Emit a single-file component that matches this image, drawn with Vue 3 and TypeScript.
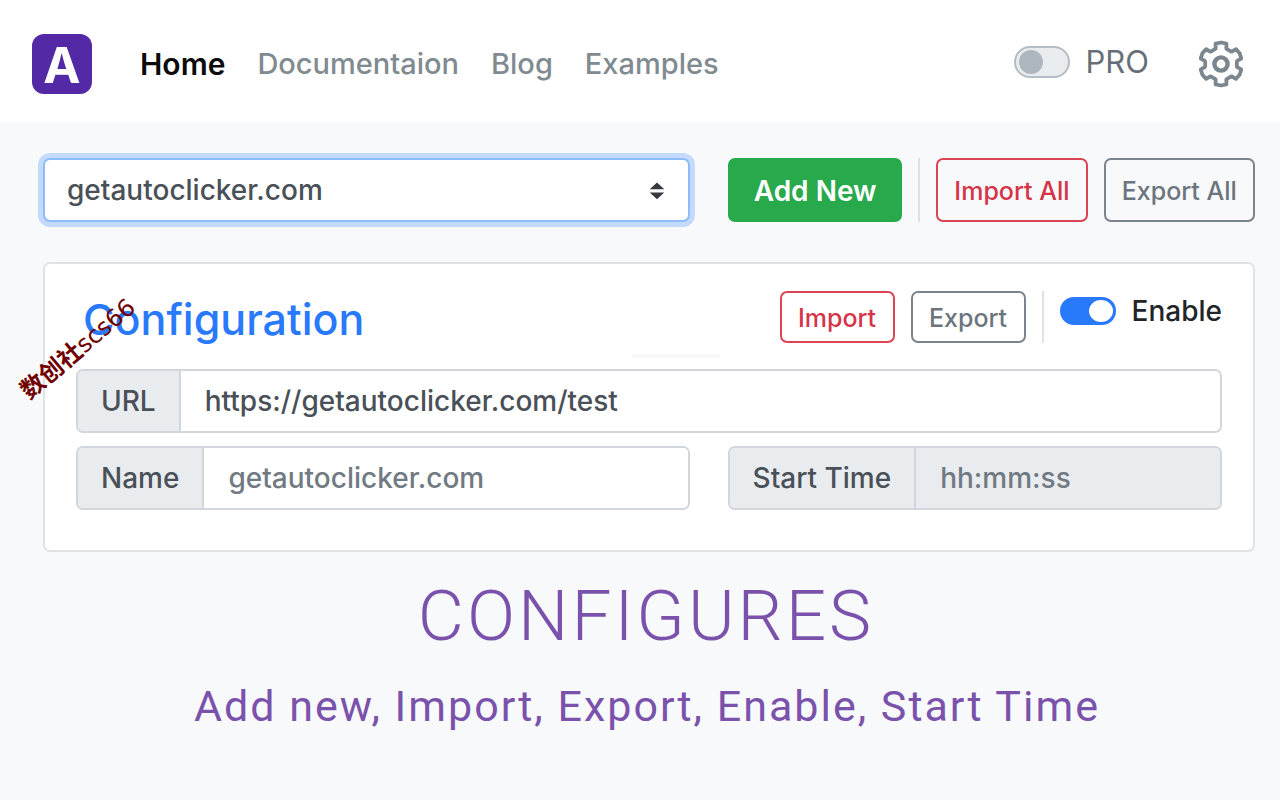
<script setup lang="ts">
import { ref } from 'vue'

interface NavLink {
  label: string
  active?: boolean
}

const links: NavLink[] = [
  { label: 'Home', active: true },
  { label: 'Documentaion' },
  { label: 'Blog' },
  { label: 'Examples' },
]

const pro = ref(false)
const enabled = ref(true)
const selected = ref('getautoclicker.com')
const url = ref('https://getautoclicker.com/test')
const name = ref('')
const startTime = ref('')

// Outline of a six-toothed cog centred on the origin.
function cogPath(outer: number, inner: number): string {
  const points: string[] = []
  for (let tooth = 0; tooth < 6; tooth++) {
    const centre = tooth * 60 - 90
    const corners: [number, number][] = [
      [centre - 19, inner],
      [centre - 15, outer],
      [centre, outer + 0.5],
      [centre + 15, outer],
      [centre + 19, inner],
      [centre + 24, inner - 0.5],
      [centre + 36, inner - 0.5],
    ]
    for (const [angle, radius] of corners) {
      const rad = (angle * Math.PI) / 180
      points.push(`${(radius * Math.cos(rad)).toFixed(2)} ${(radius * Math.sin(rad)).toFixed(2)}`)
    }
  }
  return `M${points.join('L')}Z`
}

const cog = cogPath(21, 16.4)
</script>

<template>
  <div class="page">
    <header class="navbar">
      <a class="logo" href="#" aria-label="Auto Clicker"><span>A</span></a>
      <nav class="links">
        <a v-for="link in links" :key="link.label" href="#" :class="{ active: link.active }">{{ link.label }}</a>
      </nav>
      <label class="pro">
        <input v-model="pro" class="switch" type="checkbox" />
        <span>PRO</span>
      </label>
      <button class="settings" type="button" aria-label="Settings">
        <svg viewBox="-24 -24 48 48" width="48" height="48" fill="none" stroke="#7b868e" stroke-linejoin="round">
          <path :d="cog" stroke-width="3.8" />
          <circle r="6.6" stroke-width="4.4" />
        </svg>
      </button>
    </header>

    <main class="content">
      <div class="toolbar">
        <div class="select-wrap">
          <select v-model="selected" aria-label="Configuration">
            <option>getautoclicker.com</option>
          </select>
          <svg class="caret" viewBox="0 0 16 18" width="16" height="18" fill="#343a40">
            <path d="M8 0.5L15.3 7.3H0.7ZM8 17.2L0.7 10.4H15.3Z" />
          </svg>
        </div>
        <div class="actions">
          <button class="btn primary" type="button">Add New</button>
          <span class="rule"></span>
          <button class="btn danger" type="button">Import All</button>
          <button class="btn muted" type="button">Export All</button>
        </div>
      </div>

      <section class="card">
        <div class="card-head">
          <h2>Configuration</h2>
          <button class="btn danger small" type="button">Import</button>
          <button class="btn muted small" type="button">Export</button>
          <span class="rule"></span>
          <label class="enable">
            <input v-model="enabled" class="switch" type="checkbox" />
            <span>Enable</span>
          </label>
        </div>
        <div class="fields">
          <div class="group wide">
            <label for="url">URL</label>
            <input id="url" v-model="url" type="text" />
          </div>
          <div class="group">
            <label for="name">Name</label>
            <input id="name" v-model="name" type="text" placeholder="getautoclicker.com" />
          </div>
          <div class="group">
            <label for="start">Start Time</label>
            <input id="start" v-model="startTime" type="text" placeholder="hh:mm:ss" disabled />
          </div>
        </div>
      </section>
    </main>

    <footer class="caption">
      <h1>CONFIGURES</h1>
      <p>Add new, Import, Export, Enable, Start Time</p>
    </footer>

    <div class="stamp"><b>数创社</b>scs66</div>
  </div>
</template>

<style>
body {
  background: #f8f9fb;
}
</style>

<style scoped>
.page {
  position: relative;
  min-height: 100vh;
  overflow: hidden;
  background: #f8f9fb;
  color: #495057;
  font-family: Inter, "Liberation Sans", sans-serif;
  font-size: 28px;
  font-weight: 500;
}

.page * {
  box-sizing: border-box;
}

input,
select,
button {
  margin: 0;
  font: inherit;
  color: inherit;
}

.navbar {
  display: flex;
  align-items: center;
  height: 122px;
  padding: 6px 35px 0 32px;
  background: #fff;
}

.logo {
  display: flex;
  align-items: center;
  justify-content: center;
  width: 60px;
  height: 60px;
  padding-top: 2px;
  border-radius: 12px;
  background: #5329a5;
  color: #fff;
  font-size: 50px;
  font-weight: 700;
  line-height: 58px;
  text-decoration: none;
}

.links {
  display: flex;
  flex: 1;
  gap: 32px;
  margin-left: 48px;
  font-size: 29px;
  line-height: 40px;
}

.links a {
  color: #7f8a91;
  text-decoration: none;
}

.links a.active {
  color: #0b0b0b;
  font-size: 30px;
  font-weight: 600;
}

.pro,
.enable {
  display: flex;
  align-items: center;
  gap: 16px;
  line-height: 40px;
}

.pro {
  margin-right: 48px;
  padding-bottom: 4px;
  color: #666f77;
  font-size: 31px;
  font-weight: 400;
}

.enable {
  margin: 0 0 12px 16px;
  color: #212529;
}

.switch {
  flex: none;
  display: flex;
  align-items: center;
  width: 56px;
  height: 32px;
  padding: 0 3px;
  appearance: none;
  border: 2px solid #b4bcc4;
  border-radius: 16px;
  background: #e9ecef;
}

.switch::before {
  content: "";
  width: 24px;
  height: 24px;
  border-radius: 50%;
  background: #adb5bd;
}

.switch:checked {
  justify-content: flex-end;
  height: 28px;
  border-color: #2979fd;
  background: #2979fd;
  padding: 0 1px;
}

.switch:checked::before {
  height: 22px;
  background: #fff;
}

.settings {
  display: flex;
  padding: 0;
  border: 0;
  background: none;
}

.content {
  padding: 36px 25px 0 43px;
}

.toolbar {
  display: grid;
  grid-template-columns: 647fr 527fr;
  gap: 38px;
}

.select-wrap {
  position: relative;
}

.select-wrap select {
  display: block;
  width: 100%;
  height: 64px;
  padding: 0 22px;
  appearance: none;
  border: 2px solid #8cbdfa;
  border-radius: 7px;
  outline: none;
  background: #fff;
  box-shadow: 0 0 0 5px #c3dafb;
}

.caret {
  position: absolute;
  top: 24px;
  right: 25px;
  pointer-events: none;
}

.actions {
  display: flex;
  gap: 16px;
}

.btn {
  flex: 1 1 152px;
  height: 64px;
  padding: 2px 0 0;
  border: 2px solid;
  border-radius: 7px;
  background: transparent;
  font-size: 25px;
  white-space: nowrap;
}

.btn.small {
  flex: 0 0 115px;
  height: 52px;
}

.btn.primary {
  flex-basis: 175px;
  border-color: #28a94c;
  background: #28a94c;
  color: #fff;
  font-size: 28px;
  font-weight: 600;
}

.btn.danger {
  border-color: #db4453;
  color: #d63348;
}

.btn.muted {
  border-color: #7b848c;
  color: #6c757d;
}

.rule {
  flex: none;
  width: 2px;
  background: #dee2e6;
}

.card {
  margin-top: 40px;
  padding: 27px 31px 40px;
  border: 2px solid #e0e2e5;
  border-radius: 7px;
  background: #fff;
}

.card-head {
  position: relative;
  display: flex;
  height: 52px;
}

.card-head::after {
  content: "";
  position: absolute;
  top: 63px;
  left: 48.5%;
  width: 88px;
  height: 4px;
  background: #f9f9f9;
}

.card-head h2 {
  flex: 1;
  margin: 0;
  padding-left: 7px;
  color: #2979fd;
  font-size: 43px;
  font-weight: 500;
  line-height: 56px;
}

.card-head .btn + .btn,
.card-head .rule {
  margin-left: 16px;
}

.fields {
  display: grid;
  grid-template-columns: 613fr 494fr;
  gap: 13px 38px;
  margin-top: 26px;
}

.wide {
  grid-column: 1 / -1;
}

.group {
  display: flex;
  height: 64px;
  overflow: hidden;
  border: 2px solid #d0d6dc;
  border-radius: 7px;
}

.group label {
  flex: none;
  padding: 0 23px;
  border-right: 2px solid #d0d6dc;
  background: #e9ecef;
  line-height: 60px;
}

.group input {
  flex: 1;
  min-width: 0;
  padding: 0 24px;
  border: 0;
  outline: none;
  background: #fff;
}

.group input:disabled {
  background: #e9ecef;
}

.group input::placeholder {
  color: #717a82;
  opacity: 1;
}

.caption {
  color: #7a52ab;
  font-family: Roboto, sans-serif;
  font-weight: 400;
  text-align: center;
}

.caption h1 {
  margin: 24px 0 0 12px;
  font-size: 71px;
  font-weight: 300;
  letter-spacing: 3px;
  line-height: 80px;
}

.caption p {
  margin: 25px 0 0 14px;
  font-size: 43px;
  letter-spacing: 2px;
  line-height: 50px;
}

.stamp {
  position: absolute;
  top: 334px;
  left: 3px;
  width: 150px;
  color: #700000;
  font-family: "DejaVu Sans", "Noto Sans CJK SC", sans-serif;
  font-size: 24px;
  font-weight: 400;
  line-height: 30px;
  text-align: center;
  white-space: nowrap;
  transform: rotate(-40deg);
  pointer-events: none;
}
</style>
